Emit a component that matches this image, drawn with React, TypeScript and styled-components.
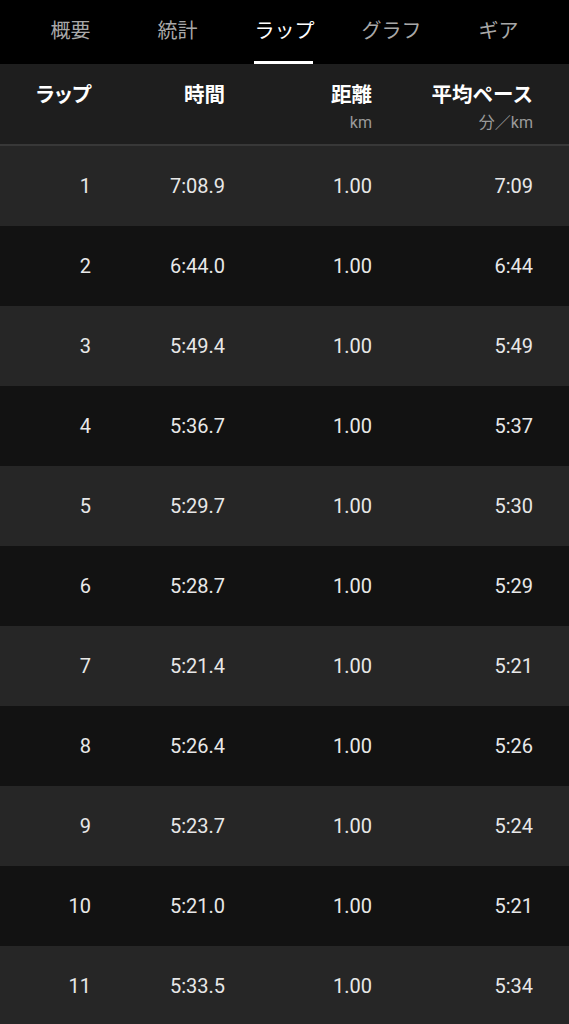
import React from "react";
import styled, { createGlobalStyle } from "styled-components";

const Global = createGlobalStyle`
  html, body { margin: 0; padding: 0; background: #000; }
  body { font-family: Roboto, "Noto Sans CJK JP", sans-serif; overflow: hidden; }
`;

const Page = styled.div`
  width: 569px;
  background: #000;
`;

const TabBar = styled.nav`
  height: 64px;
  display: grid;
  grid-template-columns: repeat(5, 107px);
  justify-content: center;
  background: #000;
`;

const Tab = styled.div<{ $active?: boolean }>`
  position: relative;
  display: flex;
  align-items: center;
  justify-content: center;
  padding-bottom: 5px;
  font-family: "Noto Sans CJK JP", sans-serif;
  font-size: 20px;
  color: ${(p) => (p.$active ? "#ffffff" : "#a8a8a8")};
  &::after {
    content: "";
    display: ${(p) => (p.$active ? "block" : "none")};
    position: absolute;
    left: 23px;
    right: 25px;
    bottom: 0;
    height: 3px;
    background: #ffffff;
  }
`;

const cols = `91px 134px 147px 161px`;

const HeaderRow = styled.div`
  display: grid;
  grid-template-columns: ${cols};
  background: #1e1e1e;
  border-bottom: 2px solid #383838;
  box-sizing: border-box;
  height: 82px;
`;

const HeadCell = styled.div`
  display: flex;
  flex-direction: column;
  align-items: flex-end;
  padding-top: 14px;
`;

const HeadTitle = styled.span<{ $proportional?: boolean }>`
  font-family: "Noto Sans CJK JP", sans-serif;
  font-weight: 700;
  font-size: 20.5px;
  line-height: 30px;
  color: #ffffff;
  font-feature-settings: ${(p) => (p.$proportional ? '"palt"' : "normal")};
`;

const HeadUnit = styled.span`
  font-family: Roboto, "Noto Sans CJK JP", sans-serif;
  font-size: 16px;
  line-height: 20px;
  margin-top: 5px;
  color: #9a9a9a;
`;

const Row = styled.div<{ $alt: boolean }>`
  display: grid;
  grid-template-columns: ${cols};
  height: 80px;
  align-items: center;
  background: ${(p) => (p.$alt ? "#121212" : "#262626")};
`;

const Cell = styled.div`
  text-align: right;
  font-family: Roboto, sans-serif;
  font-size: 20px;
  color: #e8e8e8;
`;

const tabs = ["概要", "統計", "ラップ", "グラフ", "ギア"];

const laps = [
  ["1", "7:08.9", "1.00", "7:09"],
  ["2", "6:44.0", "1.00", "6:44"],
  ["3", "5:49.4", "1.00", "5:49"],
  ["4", "5:36.7", "1.00", "5:37"],
  ["5", "5:29.7", "1.00", "5:30"],
  ["6", "5:28.7", "1.00", "5:29"],
  ["7", "5:21.4", "1.00", "5:21"],
  ["8", "5:26.4", "1.00", "5:26"],
  ["9", "5:23.7", "1.00", "5:24"],
  ["10", "5:21.0", "1.00", "5:21"],
  ["11", "5:33.5", "1.00", "5:34"],
];

export default function App() {
  return (
    <Page>
      <Global />
      <TabBar>
        {tabs.map((t) => (
          <Tab key={t} $active={t === "ラップ"}>
            {t}
          </Tab>
        ))}
      </TabBar>
      <HeaderRow>
        <HeadCell>
          <HeadTitle $proportional>ラップ</HeadTitle>
        </HeadCell>
        <HeadCell>
          <HeadTitle>時間</HeadTitle>
        </HeadCell>
        <HeadCell>
          <HeadTitle>距離</HeadTitle>
          <HeadUnit>km</HeadUnit>
        </HeadCell>
        <HeadCell>
          <HeadTitle>平均ペース</HeadTitle>
          <HeadUnit>分／km</HeadUnit>
        </HeadCell>
      </HeaderRow>
      {laps.map((l, i) => (
        <Row key={l[0]} $alt={i % 2 === 1}>
          {l.map((v, j) => (
            <Cell key={j}>{v}</Cell>
          ))}
        </Row>
      ))}
    </Page>
  );
}
